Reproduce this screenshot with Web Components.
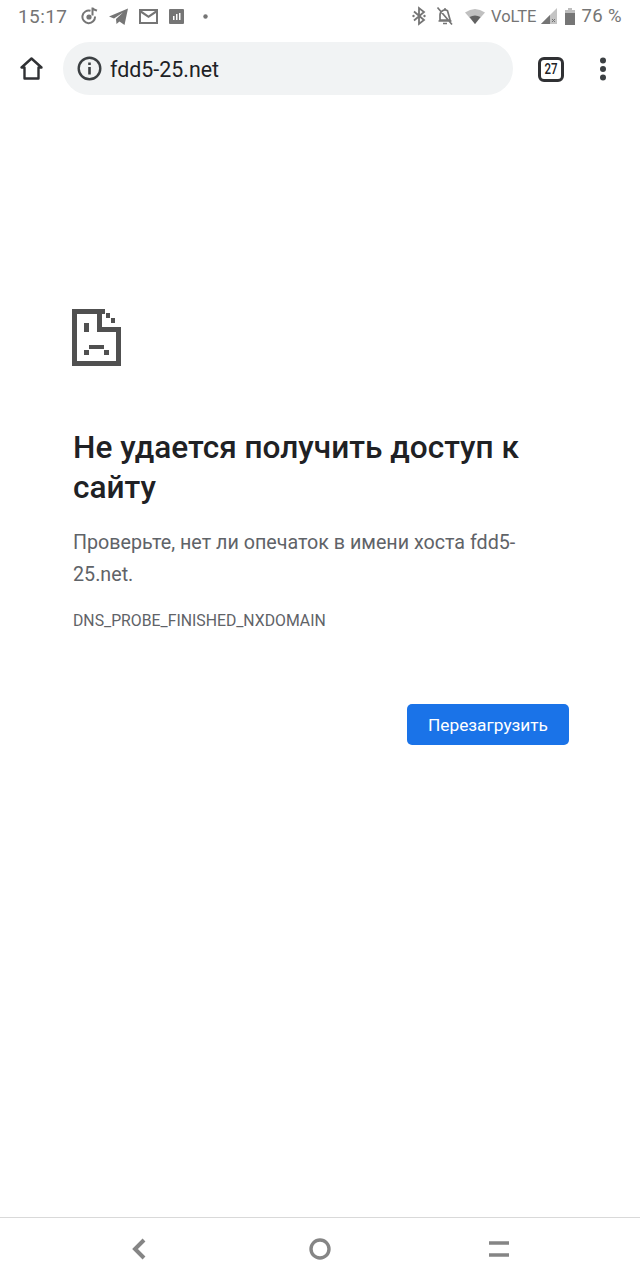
<!DOCTYPE html>
<html lang="ru">
<head>
<meta charset="utf-8">
<title>fdd5-25.net</title>
<style>
  html, body { margin: 0; padding: 0; background: #fff; }
  body { font-family: Roboto, "Liberation Sans", sans-serif; }
  .page { display: flex; flex-direction: column; width: 640px; height: 1280px; overflow: hidden; }
</style>
</head>
<body>
<div class="page">
  <status-bar></status-bar>
  <browser-toolbar url="fdd5-25.net" tabs="27"></browser-toolbar>
  <error-page>
    <span slot="title">Не удается получить доступ к сайту</span>
    <span slot="message">Проверьте, нет ли опечаток в имени хоста fdd5-25.net.</span>
    <span slot="code">DNS_PROBE_FINISHED_NXDOMAIN</span>
    <span slot="action">Перезагрузить</span>
  </error-page>
  <nav-bar></nav-bar>
</div>

<script>
class StatusBar extends HTMLElement {
  connectedCallback() {
    this.attachShadow({ mode: "open" });
    this.shadowRoot.innerHTML = `
      <style>
        :host { display: flex; align-items: center; height: 32px; padding: 0 18px 0 18px; color: #757575; font-size: 19px; flex-shrink: 0; }
        svg { display: block; flex-shrink: 0; }
        .left, .right { display: flex; align-items: center; }
        .right { margin-left: auto; }
        .time { letter-spacing: 0.4px; margin-right: 14px; }
        .volte { font-size: 16.5px; margin-left: 6px; }
        .pct { font-size: 18.5px; letter-spacing: 0.4px; margin-left: 6px; }
      </style>
      <div class="left">
        <span class="time">15:17</span>
        <svg width="18" height="20" viewBox="0 0 18 20" style="margin-right:10px"><path d="M9.500 4.800A6.300 6.300 0 1 0 14 10.500" fill="none" stroke="#757575" stroke-width="2"/><circle cx="8" cy="11" r="2.600" fill="#757575"/><path d="M11.500 1.500v8M11.500 2c1 2 3 2 4.500 2.500" fill="none" stroke="#757575" stroke-width="2"/></svg>
        <svg width="20" height="20" viewBox="0 0 20 20" style="margin-right:10px"><path d="M0 10.500 19 2.500 15.500 19 10.500 15.500 7.500 18 7 13 14 6.500 5 12.500Z" fill="#757575"/></svg>
        <svg width="19" height="15" viewBox="0 0 19 15" style="margin-right:11px"><path fill-rule="evenodd" d="M0 0h19v15H0ZM2 4v9h15V4l-7.500 5ZM3 2l6.500 4.500L16 2Z" fill="#757575"/></svg>
        <svg width="15" height="15" viewBox="0 0 15 15" style="margin-right:19px"><path fill-rule="evenodd" d="M1 0h13a1 1 0 0 1 1 1v13a1 1 0 0 1-1 1H1a1 1 0 0 1-1-1V1a1 1 0 0 1 1-1ZM4 7v4h1.500V7ZM7 5v6h1.500V5ZM10 4v7h1.500V4Z" fill="#757575"/></svg>
        <svg width="5" height="5" viewBox="0 0 5 5"><circle cx="2.500" cy="2.500" r="2.200" fill="#757575"/></svg>
      </div>
      <div class="right">
        <svg width="14" height="20" viewBox="0 0 14 20" style="margin-right:10px"><path d="M2 5.500 12 14 7 18V2l5 4L2 14.500" fill="none" stroke="#757575" stroke-width="1.800"/><circle cx="1.500" cy="10" r="1.200" fill="#757575"/><circle cx="12.500" cy="10" r="1.200" fill="#757575"/></svg>
        <svg width="18" height="20" viewBox="0 0 18 20" style="margin-right:11px"><path d="M4 14V9a5 5 0 0 1 7.500-4.300L14 13.500V14ZM2.500 15h13M7 17.500h4M8 3h2M1.500 1.500 16 18.500" fill="none" stroke="#757575" stroke-width="1.700"/></svg>
        <svg width="20" height="15" viewBox="0 0 20 15"><path d="M0 3.500Q10-3.500 20 3.500L10 15Z" fill="#c0c0c0"/><path d="M4.500 8Q10 5 15.500 8L10 15Z" fill="#616161"/></svg>
        <span class="volte">VoLTE</span>
        <svg width="16" height="16" viewBox="0 0 16 16" style="margin-left:5px"><path d="M16 0V16H0Z" fill="#c4c4c4"/><path d="M9 7V16H0Z" fill="#757575"/><path d="M11 11l3 3M14 11l-3 3" stroke="#757575" stroke-width="1"/></svg>
        <svg width="10" height="17" viewBox="0 0 10 17" style="margin-left:8px"><path d="M3 0h4v2h3v15H0V2h3Z" fill="#bdbdbd"/><path d="M0 5h10v12H0Z" fill="#757575"/></svg>
        <span class="pct">76 %</span>
      </div>
    `;
  }
}

class BrowserToolbar extends HTMLElement {
  connectedCallback() {
    this.attachShadow({ mode: "open" });
    const url = this.getAttribute("url");
    const tabs = this.getAttribute("tabs");
    this.shadowRoot.innerHTML = `
      <style>
        :host { display: flex; align-items: center; height: 72px; padding-bottom: 2px; flex-shrink: 0; color: #202124; }
        svg { display: block; flex-shrink: 0; }
        .home { margin-left: 19px; margin-right: 19px; }
        .omnibox { display: flex; align-items: center; width: 450px; height: 53px; border-radius: 27px; background: #f1f3f4; box-sizing: border-box; padding-left: 14px; }
        .url { font-size: 21.400px; margin-left: 8px; padding-top: 2px; }
        .tabs { display: flex; align-items: center; justify-content: center; width: 20px; height: 19px; margin-left: 25px; margin-top: 2px; border: 3px solid #303134; border-radius: 6px; font-size: 14px; font-weight: 500; }
        .tabs span { display: inline-block; transform: scaleX(0.82); }
        .menu { margin-left: 35px; margin-top: 1px; }
      </style>
      <svg class="home" width="25" height="25" viewBox="0 0 25 25"><path d="M12.500 2.500 2.500 11.500h3V22.500h14V11.500h3Z" fill="none" stroke="#303134" stroke-width="2.400" stroke-linejoin="round"/></svg>
      <div class="omnibox">
        <svg width="25" height="25" viewBox="0 0 25 25"><circle cx="12.500" cy="12.500" r="10.800" fill="none" stroke="#3c4043" stroke-width="2.400"/><path d="M11.200 11h2.600v7.500h-2.600ZM11.200 6.500h2.600v2.600h-2.600Z" fill="#3c4043"/></svg>
        <span class="url">${url}</span>
      </div>
      <span class="tabs"><span>${tabs}</span></span>
      <svg class="menu" width="8" height="24" viewBox="0 0 8 24"><circle cx="4" cy="3.500" r="3" fill="#3c4043"/><circle cx="4" cy="12" r="3" fill="#3c4043"/><circle cx="4" cy="20.500" r="3" fill="#3c4043"/></svg>
    `;
  }
}

class ErrorPage extends HTMLElement {
  connectedCallback() {
    this.attachShadow({ mode: "open" });
    this.shadowRoot.innerHTML = `
      <style>
        :host { display: block; flex: 1; padding: 203px 71px 0 73px; }
        svg { display: block; margin-left: -1px; }
        h1 { margin: 62px 0 0; font-size: 31.600px; line-height: 40px; font-weight: 500; color: #202124; }
        p { margin: 19px 0 0; font-size: 19.700px; line-height: 32px; color: #5f6368; }
        .code { margin-top: 20px; font-size: 15.800px; line-height: 20px; color: #5f6368; }
        .actions { display: flex; justify-content: flex-end; margin-top: 73px; }
        .btn { display: flex; align-items: center; justify-content: center; width: 162px; height: 41px; border-radius: 5px; background: #1a73e8; color: #fff; font-size: 17.300px; }
      </style>
      <svg width="49" height="57" viewBox="0 0 49 57" shape-rendering="crispEdges" fill="#505050">
        <path d="M0 0h33v5H5v47h39V23H25V0h5v18h19v39H0Z"/>
        <path d="M34 4h4v5h-4ZM39 9h4v5h-4Z"/>
        <path d="M12 14h5v9h-5Z"/>
        <path d="M17 36h15v4H17ZM12 41h5v5h-5ZM32 41h5v5h-5Z"/>
      </svg>
      <h1><slot name="title"></slot></h1>
      <p><slot name="message"></slot></p>
      <div class="code"><slot name="code"></slot></div>
      <div class="actions"><div class="btn"><slot name="action"></slot></div></div>
    `;
  }
}

class NavBar extends HTMLElement {
  connectedCallback() {
    this.attachShadow({ mode: "open" });
    this.shadowRoot.innerHTML = `
      <style>
        :host { display: grid; grid-template-columns: 20px 22px 20px; justify-content: space-between; align-items: center; height: 62px; padding: 0 131px 0 131px; border-top: 1px solid #d9d9d9; flex-shrink: 0; }
        svg { display: block; }
      </style>
      <svg width="18" height="22" viewBox="0 0 18 22"><path d="M13 2 4 11l9 9" fill="none" stroke="#858585" stroke-width="4"/></svg>
      <svg width="22" height="22" viewBox="0 0 22 22"><circle cx="11" cy="11" r="9" fill="none" stroke="#858585" stroke-width="3.400"/></svg>
      <svg width="20" height="18" viewBox="0 0 20 18"><path d="M0 3h20M0 15h20" stroke="#858585" stroke-width="3.600"/></svg>
    `;
  }
}

customElements.define("status-bar", StatusBar);
customElements.define("browser-toolbar", BrowserToolbar);
customElements.define("error-page", ErrorPage);
customElements.define("nav-bar", NavBar);
</script>
</body>
</html>
